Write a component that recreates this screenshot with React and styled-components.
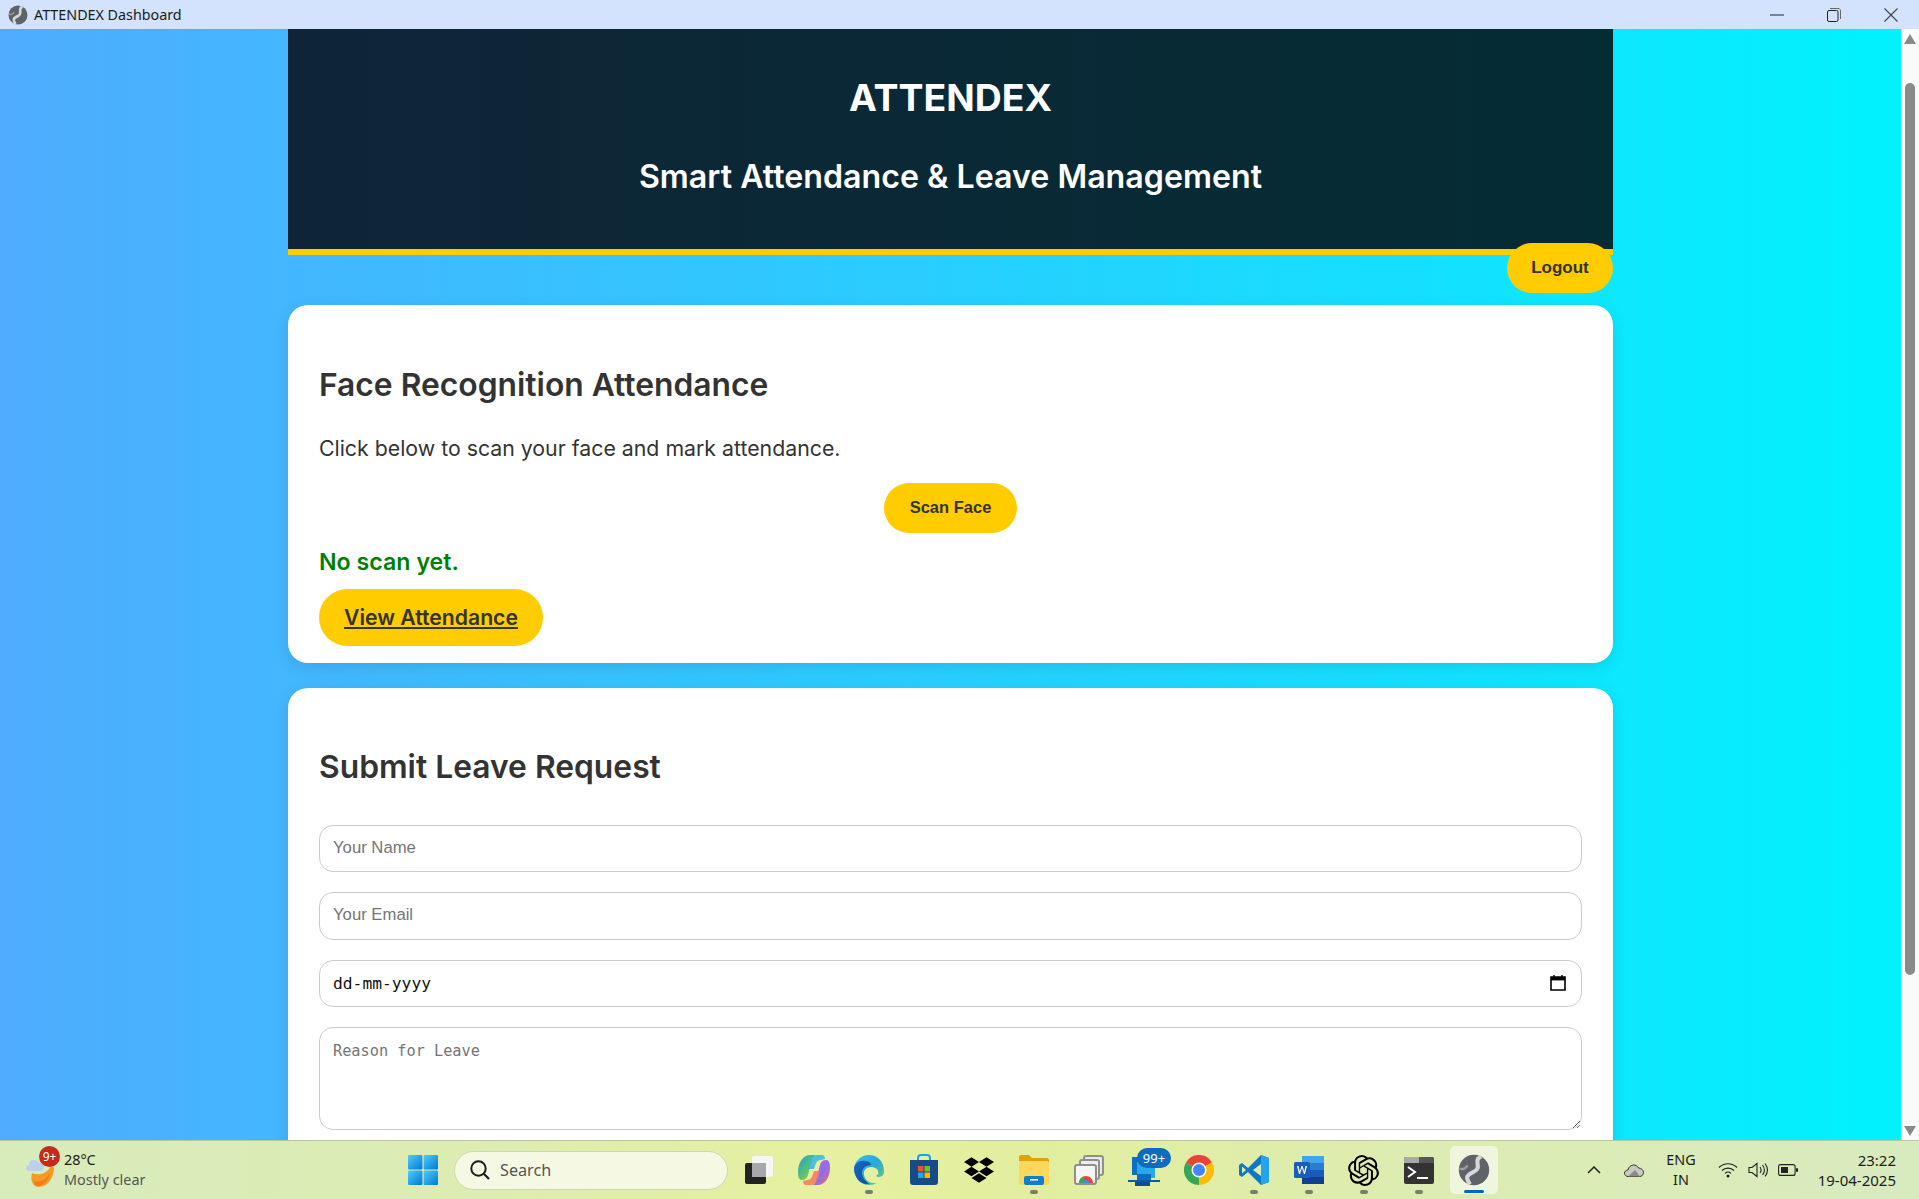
import React from "react";
import styled, { createGlobalStyle } from "styled-components";
import { SiDropbox, SiOpenai } from "react-icons/si";

const GlobalStyle = createGlobalStyle`
  html, body {
    margin: 0;
    height: 100%;
    overflow: hidden;
  }
  * {
    box-sizing: border-box;
  }
`;

const HEAD_FONT = `Inter, "Noto Sans", sans-serif`;
const UI_FONT = `"Noto Sans", "Open Sans", sans-serif`;
const ARIAL = `"Liberation Sans", Arial, sans-serif`;
const MONO = `"DejaVu Sans Mono", "Liberation Mono", monospace`;

const Globe = ({ size = 20 }) => (
  <svg width={size} height={size} viewBox="0 0 20 20">
    <circle cx="10" cy="10" r="9.500" fill="#5f6367" />
    <path d="M14.500 1.500C9 4 15.500 8.500 10 11S5 15 7.500 19" fill="none" stroke="#d5d8da" strokeWidth="2.600" />
    <path d="M1 9c2 1 4 0 5-2" fill="none" stroke="#9a9ea2" strokeWidth="1.500" />
  </svg>
);

const StartIcon = () => (
  <svg width="30" height="30" viewBox="0 0 30 30">
    <defs>
      <linearGradient id="win" x1="0" y1="0" x2="1" y2="1">
        <stop offset="0" stopColor="#50cdf8" />
        <stop offset="1" stopColor="#0078d4" />
      </linearGradient>
    </defs>
    <rect x="0" y="0" width="14.400" height="14.400" rx="1" fill="url(#win)" />
    <rect x="15.600" y="0" width="14.400" height="14.400" rx="1" fill="url(#win)" />
    <rect x="0" y="15.600" width="14.400" height="14.400" rx="1" fill="url(#win)" />
    <rect x="15.600" y="15.600" width="14.400" height="14.400" rx="1" fill="url(#win)" />
  </svg>
);

const TaskViewIcon = () => (
  <svg width="32" height="32" viewBox="0 0 32 32">
    <rect x="2" y="9" width="21" height="21" rx="2" fill="#222" />
    <rect x="9" y="2" width="21" height="21" rx="2" fill="#f6f6f4" />
    <rect x="9" y="9" width="14" height="14" fill="#a8a8a8" />
  </svg>
);

const CopilotIcon = () => (
  <svg width="32" height="32" viewBox="0 0 32 32">
    <defs>
      <linearGradient id="cop1" x1="0" y1="0" x2="1" y2="1">
        <stop offset="0" stopColor="#1f9be0" />
        <stop offset=".55" stopColor="#58c66a" />
        <stop offset="1" stopColor="#f2c53a" />
      </linearGradient>
      <linearGradient id="cop2" x1="0" y1="0" x2="1" y2="1">
        <stop offset="0" stopColor="#d860c8" />
        <stop offset=".55" stopColor="#8f6cf0" />
        <stop offset="1" stopColor="#f36f4e" />
      </linearGradient>
    </defs>
    <path d="M12 1h7c-3 0-4 2-5 5l-3 11c-1 5-2 9-7 9-3 0-4-3-4-8C0 9 5 1 12 1z" fill="url(#cop1)" />
    <path d="M20 31h-7c3 0 4-2 5-5l3-11c1-5 2-9 7-9 3 0 4 3 4 8 0 9-5 17-12 17z" fill="url(#cop2)" />
    <path d="M9 26c4 0 5-3 6-6l1-3h6l-2 7c-1 3-3 7-7 7H8c-2 0-3-2-3-4z" fill="#f47a5a" opacity=".85" />
    <path d="M23 6c-4 0-5 3-6 6l-1 3h-6l2-7c1-3 3-7 7-7h5c2 0 3 2 3 4z" fill="#35b6e0" opacity=".85" />
  </svg>
);

const EdgeIcon = () => (
  <svg width="32" height="32" viewBox="0 0 32 32">
    <defs>
      <linearGradient id="edgeA" x1="0" y1="0" x2="1" y2="1">
        <stop offset="0" stopColor="#35c1f1" />
        <stop offset=".5" stopColor="#2aa8d8" />
        <stop offset="1" stopColor="#66d36e" />
      </linearGradient>
      <linearGradient id="edgeB" x1="0" y1="0" x2="1" y2="1">
        <stop offset="0" stopColor="#1a6bc4" />
        <stop offset="1" stopColor="#0c4a96" />
      </linearGradient>
    </defs>
    <path d="M16 1C8 1 2 7 1 14c0 9 6 17 15 17 3 0 6-1 8-2-6 1-12-2-13-8-1-4 2-8 7-8 3 0 6 1 7 4 1 2 0 4-2 5 3 2 8 1 8-5C31 7 24 1 16 1z" fill="url(#edgeA)" />
    <path d="M1 14c1-5 6-8 11-7 5 0 6 3 6 4-5 0-9 3-9 8 0 4 3 8 7 11-9 1-15-7-15-16z" fill="url(#edgeB)" />
  </svg>
);

const StoreIcon = () => (
  <svg width="30" height="32" viewBox="0 0 30 32">
    <path d="M9 7V4c0-2 1-3 3-3h6c2 0 3 1 3 3v3" fill="none" stroke="#1da1e2" strokeWidth="2" />
    <path d="M1 6h28v22c0 2-1 3-3 3H4c-2 0-3-1-3-3z" fill="#164b86" />
    <rect x="9" y="12" width="5.500" height="5.500" fill="#e8542c" />
    <rect x="15.500" y="12" width="5.500" height="5.500" fill="#7cb82f" />
    <rect x="9" y="18.500" width="5.500" height="5.500" fill="#26a6e8" />
    <rect x="15.500" y="18.500" width="5.500" height="5.500" fill="#f5b800" />
  </svg>
);

const FolderIcon = () => (
  <svg width="30" height="30" viewBox="0 0 30 30">
    <path d="M0 2c0-1 1-2 2-2h8l3 3h15c1 0 2 1 2 2v5H0z" fill="#e0a30a" />
    <path d="M0 6h28c1 0 2 1 2 2v20c0 1-1 2-2 2H2c-1 0-2-1-2-2z" fill="#fdd75c" />
    <rect x="5" y="21" width="20" height="9" rx="2" fill="#0f7fc8" />
    <rect x="11" y="24" width="8" height="1.600" fill="#e9f5ff" />
  </svg>
);

const GalleryIcon = () => (
  <svg width="30" height="30" viewBox="0 0 30 30">
    <rect x="10" y="1" width="19" height="19" rx="2" fill="#e9e9e6" stroke="#8f8f8f" strokeWidth="2" />
    <rect x="6" y="5" width="19" height="19" rx="2" fill="#eeeeeb" stroke="#8f8f8f" strokeWidth="2" />
    <rect x="1" y="10" width="21" height="19" rx="2" fill="#f6f6f4" stroke="#8f8f8f" strokeWidth="2" />
    <path d="M5 28a7 7 0 0 1 14 0z" fill="#ea4335" />
    <path d="M5 28a7 7 0 0 1 5-6.500l1 6.500z" fill="#34a853" />
    <path d="M15 28a3 3 0 0 0-6 0z" fill="#4285f4" />
  </svg>
);

const OutlookIcon = () => (
  <svg width="32" height="32" viewBox="0 0 32 32">
    <rect x="4" y="3" width="15" height="18" fill="#1070c0" />
    <rect x="9" y="8" width="18" height="16" fill="#28a8ea" />
    <path d="M0 26h32v2H0z" fill="#0a5ca8" />
    <rect x="7" y="28" width="15" height="4" fill="#0a4f92" />
    <rect x="9" y="20" width="14" height="6" fill="#0f6cbd" />
  </svg>
);

const ChromeIcon = () => (
  <svg width="30" height="30" viewBox="0 0 30 30">
    <path d="M15 15 2 7.500A15 15 0 0 1 28 7.500z" fill="#ea4335" />
    <path d="M15 15 2 7.500A15 15 0 0 0 15 30z" fill="#34a853" />
    <path d="M15 15 28 7.500A15 15 0 0 1 15 30z" fill="#fbbc04" />
    <circle cx="15" cy="15" r="7.500" fill="#fff" />
    <circle cx="15" cy="15" r="6" fill="#4285f4" />
  </svg>
);

const VsCodeIcon = () => (
  <svg width="30" height="30" viewBox="0 0 30 30">
    <path d="M22 0 9 13 3 8 0 10v10l3 2 6-5 13 13 8-3V3z" fill="#0f78c4" />
    <path d="M22 0v30l8-3V3z" fill="#22a4ee" />
    <path d="M22 9v12l-8-6z" fill="#dfeeb0" />
    <path d="M3 11.500v7l4-3.500z" fill="#dfeeb0" />
  </svg>
);

const WordIcon = () => (
  <svg width="30" height="30" viewBox="0 0 30 30">
    <rect x="8" y="1" width="22" height="7" fill="#41a5ee" />
    <rect x="8" y="8" width="22" height="7" fill="#2b7cd3" />
    <rect x="8" y="15" width="22" height="7" fill="#185abd" />
    <rect x="8" y="22" width="22" height="7" fill="#103f91" />
    <rect x="0" y="7" width="16" height="16" rx="1.500" fill="#1a5dbe" />
    <path d="m3 11 2 8h1l2-6 2 6h1l2-8h-1.500l-1.200 5.500L8.500 11h-1l-1.800 5.500L4.500 11z" fill="#fff" />
  </svg>
);

const TerminalIcon = () => (
  <svg width="30" height="30" viewBox="0 0 30 30">
    <rect x="0" y="2" width="30" height="27" rx="2" fill="#333" />
    <path d="M0 4c0-1 1-2 2-2h13v6H0z" fill="#a9a9a9" />
    <path d="M15 2h13c1 0 2 1 2 2v4H15z" fill="#555" />
    <path d="m4 12 7 5-7 5" fill="none" stroke="#fff" strokeWidth="2" />
    <rect x="13" y="22" width="11" height="2" fill="#fff" />
  </svg>
);

const WeatherIcon = () => (
  <svg width="30" height="42" viewBox="0 0 30 42">
    <path d="M6 24c6 3 15 1 18-6 2-1 4 0 4 1 0 10-7 19-15 19-6 0-9-6-7-14z" fill="#f59a23" />
    <path d="M8 32c5 2 12-1 16-8-1 7-7 13-12 13-2 0-4-2-4-5z" fill="#f07d1a" />
    <path d="M3 22c-2 0-3-1.500-3-3s1-3 3-3c0-3 2-5 5-5s4 1 5 3c3 0 5 2 5 4s-1 4-4 4z" fill="#bcd0ee" />
  </svg>
);

const App = () => (
  <Shell>
    <GlobalStyle />
    <TitleBar>
      <Globe size={20} />
      <WindowTitle>ATTENDEX Dashboard</WindowTitle>
      <WindowControls>
        <svg width="14" height="14" viewBox="0 0 14 14">
          <path d="M0 7h14" stroke="#222" strokeWidth="1" />
        </svg>
        <svg width="14" height="14" viewBox="0 0 14 14">
          <rect x=".5" y="2.500" width="10.500" height="11" rx="1.500" fill="none" stroke="#222" />
          <path d="M3 .5h8c1.500 0 2.500 1 2.500 2.500v8" fill="none" stroke="#666" />
        </svg>
        <svg width="14" height="14" viewBox="0 0 14 14">
          <path d="m.5.5 13 13M13.500.5l-13 13" stroke="#444" strokeWidth="1.100" />
        </svg>
      </WindowControls>
    </TitleBar>

    <Middle>
      <Page>
        <Container>
          <HeaderWrap>
            <Header>
              <Title>ATTENDEX</Title>
              <Subtitle>Smart Attendance &amp; Leave Management</Subtitle>
            </Header>
            <LogoutButton>Logout</LogoutButton>
          </HeaderWrap>

          <Card $top={50} $pad={60} $bottom={17}>
            <CardTitle>Face Recognition Attendance</CardTitle>
            <Lead>Click below to scan your face and mark attendance.</Lead>
            <Centered>
              <PillButton>Scan Face</PillButton>
            </Centered>
            <Status>No scan yet.</Status>
            <ViewLink href="#">View Attendance</ViewLink>
          </Card>

          <Card $top={25} $pad={59} $bottom={30}>
            <CardTitle>Submit Leave Request</CardTitle>
            <Form>
              <TextInput type="text" placeholder="Your Name" />
              <TextInput type="email" placeholder="Your Email" />
              <DateField>
                <DateText>dd-mm-yyyy</DateText>
                <svg width="16" height="16" viewBox="0 0 16 16">
                  <path d="M1 2h14v13H1z" fill="none" stroke="#000" strokeWidth="1.600" />
                  <path d="M1 2h14v3.400H1z" fill="#000" />
                  <path d="M4 0v3M12 0v3" stroke="#000" strokeWidth="1.400" />
                </svg>
              </DateField>
              <ReasonBox placeholder="Reason for Leave" />
            </Form>
          </Card>
        </Container>
      </Page>

      <Scrollbar>
        <ArrowUp />
        <Thumb />
        <ArrowDown />
      </Scrollbar>
    </Middle>

    <Taskbar>
      <Weather>
        <WeatherArt>
          <WeatherIcon />
          <WeatherBadge>9+</WeatherBadge>
        </WeatherArt>
        <WeatherText>
          <Temp>28°C</Temp>
          <Sky>Mostly clear</Sky>
        </WeatherText>
      </Weather>

      <Tile>
        <StartIcon />
      </Tile>
      <SearchBox>
        <svg width="22" height="22" viewBox="0 0 22 22">
          <circle cx="9.500" cy="9.500" r="7.200" fill="none" stroke="#1c1c1c" strokeWidth="2" />
          <path d="m14.800 14.800 5.200 5.200" stroke="#1c1c1c" strokeWidth="2.200" />
        </svg>
        <span>Search</span>
      </SearchBox>
      <Tile>
        <TaskViewIcon />
      </Tile>
      <Tile>
        <CopilotIcon />
      </Tile>
      <Tile $dot>
        <EdgeIcon />
      </Tile>
      <Tile>
        <StoreIcon />
      </Tile>
      <Tile>
        <SiDropbox size={30} color="#000" />
      </Tile>
      <Tile $dot>
        <FolderIcon />
      </Tile>
      <Tile>
        <GalleryIcon />
      </Tile>
      <Tile>
        <OutlookIcon />
        <CountBadge>99+</CountBadge>
      </Tile>
      <Tile>
        <ChromeIcon />
      </Tile>
      <Tile $dot>
        <VsCodeIcon />
      </Tile>
      <Tile $dot>
        <WordIcon />
      </Tile>
      <Tile $dot>
        <SiOpenai size={31} color="#000" />
      </Tile>
      <Tile $dot>
        <TerminalIcon />
      </Tile>
      <ActiveTile>
        <Globe size={32} />
      </ActiveTile>

      <Tray>
        <svg width="14" height="8" viewBox="0 0 14 8">
          <path d="m1 7 6-6 6 6" fill="none" stroke="#222" strokeWidth="1.500" />
        </svg>
        <svg width="20" height="14" viewBox="0 0 20 14">
          <path d="M4 13.500c-2 0-3.500-1.500-3.500-3.300S2 7 4 7c.5-3 3-5 5.500-5 2.300 0 4 1 5 3 2.500 0 5 2 5 4.500s-2 4-4 4z" fill="#c9c9c4" stroke="#333" />
          <path d="M4 13.500 11 7l5 6.500z" fill="#8a8a86" />
        </svg>
        <Lang>
          <span>ENG</span>
          <span>IN</span>
        </Lang>
        <StatusIcons>
          <svg width="20" height="16" viewBox="0 0 20 16">
            <path d="M1 5.500c5-5 13-5 18 0M4 8.500c3.300-3.300 8.700-3.300 12 0M7 11.300c1.700-1.700 4.300-1.700 6 0" fill="none" stroke="#222" strokeWidth="1.200" />
            <circle cx="10" cy="14" r="1.500" fill="#222" />
          </svg>
          <svg width="20" height="16" viewBox="0 0 20 16">
            <path d="M1 5.500h3L9 1.500v13l-5-4H1z" fill="none" stroke="#222" strokeWidth="1.100" />
            <path d="M12 5c1.300 1.800 1.300 4.200 0 6M14.500 3c2.300 3 2.300 7 0 10M17 1.500c3 4 3 9 0 13" fill="none" stroke="#222" strokeWidth="1.100" />
          </svg>
          <svg width="20" height="12" viewBox="0 0 20 12">
            <rect x=".6" y=".6" width="16.500" height="10.800" rx="2" fill="none" stroke="#222" strokeWidth="1.100" />
            <rect x="3" y="3" width="7" height="6" fill="#222" />
            <rect x="18" y="4" width="2" height="4" rx="1" fill="#222" />
          </svg>
        </StatusIcons>
        <Clock>
          <span>23:22</span>
          <span>19-04-2025</span>
        </Clock>
      </Tray>
    </Taskbar>
  </Shell>
);

const Shell = styled.div`
  height: 100vh;
  display: flex;
  flex-direction: column;
  overflow: hidden;
`;

const TitleBar = styled.div`
  flex: 0 0 29px;
  display: flex;
  align-items: center;
  padding-left: 8px;
  background: #d3e3fd;
`;

const WindowTitle = styled.span`
  margin-left: 6px;
  font: 14.300px ${UI_FONT};
  color: #1a1a1a;
`;

const WindowControls = styled.div`
  margin-left: auto;
  display: flex;
  gap: 43px;
  padding-right: 21px;
  align-items: center;
`;

const Middle = styled.div`
  flex: 1;
  min-height: 0;
  display: flex;
`;

const Page = styled.main`
  flex: 1;
  min-width: 0;
  overflow: hidden;
  background: linear-gradient(to right, #4facfe 0%, #00f2fe 100%);
`;

const Container = styled.div`
  width: 1325px;
  margin-left: 288px;
`;

const HeaderWrap = styled.div`
  position: relative;
`;

const Header = styled.header`
  height: 226px;
  padding-top: 45px;
  text-align: center;
  color: #fff;
  border-bottom: 6px solid #ffcc00;
  background: linear-gradient(to right, #0f2537, #042c34);
`;

const Title = styled.h1`
  margin: 0;
  font: 700 37.400px/48px ${HEAD_FONT};
`;

const Subtitle = styled.h2`
  margin: 35px 0 0;
  font: 600 32.200px/40px ${HEAD_FONT};
`;

const LogoutButton = styled.button`
  position: absolute;
  right: 0;
  top: 214px;
  width: 106px;
  height: 50px;
  border: none;
  border-radius: 25px;
  background: #ffcc00;
  color: #333;
  font: 700 17px ${ARIAL};
`;

const Card = styled.section`
  margin-top: ${p => p.$top}px;
  padding: ${p => p.$pad}px 31px ${p => p.$bottom}px;
  background: #fff;
  border-radius: 20px;
  box-shadow: 0 4px 15px rgba(0, 0, 0, 0.1);
`;

const CardTitle = styled.h2`
  margin: 0;
  font: 600 31.800px/40px ${HEAD_FONT};
  color: #333;
`;

const Lead = styled.p`
  margin: 28px 0 0;
  font: 400 21.300px/30px ${HEAD_FONT};
  color: #333;
`;

const Centered = styled.div`
  margin-top: 20px;
  display: flex;
  justify-content: center;
`;

const PillButton = styled.button`
  width: 133px;
  height: 50px;
  padding-bottom: 2px;
  border: none;
  border-radius: 25px;
  background: #ffcc00;
  color: #333;
  font: 700 16.500px ${ARIAL};
`;

const Status = styled.p`
  margin: 14px 0 0;
  font: 600 23.200px/30px ${HEAD_FONT};
  color: #008000;
`;

const ViewLink = styled.a`
  display: inline-flex;
  align-items: center;
  justify-content: center;
  margin-top: 12px;
  width: 224px;
  height: 57px;
  padding-bottom: 2px;
  border-radius: 29px;
  background: #ffcc00;
  color: #333;
  font: 600 21.200px ${HEAD_FONT};
  text-decoration: underline;
`;

const Form = styled.div`
  margin-top: 38px;
  display: flex;
  flex-direction: column;
  gap: 20px;
`;

const TextInput = styled.input`
  width: 100%;
  height: 47.330px;
  padding: 0 13px 2px;
  border: 1.500px solid #ccc;
  border-radius: 14px;
  outline: none;
  font: 16.700px ${ARIAL};
  &::placeholder {
    color: #757575;
  }
`;

const DateField = styled.div`
  height: 47.330px;
  padding: 0 15.500px 0 13px;
  display: flex;
  align-items: center;
  justify-content: space-between;
  border: 1.500px solid #ccc;
  border-radius: 14px;
`;

const DateText = styled.span`
  font: 16.300px ${MONO};
  color: #111;
`;

const ReasonBox = styled.textarea`
  display: block;
  width: 100%;
  height: 103px;
  padding: 14px 13px;
  border: 1.500px solid #ccc;
  border-radius: 14px;
  outline: none;
  font: 15.250px ${MONO};
  &::placeholder {
    color: #757575;
  }
`;

const Scrollbar = styled.div`
  flex: 0 0 18px;
  display: flex;
  flex-direction: column;
  align-items: center;
  padding: 5px 0 4px;
  background: #fafafa;
`;

const ArrowUp = styled.div`
  width: 0;
  height: 0;
  border-left: 6px solid transparent;
  border-right: 6px solid transparent;
  border-bottom: 10px solid #8a8a8a;
`;

const ArrowDown = styled.div`
  width: 0;
  height: 0;
  margin-top: auto;
  border-left: 6px solid transparent;
  border-right: 6px solid transparent;
  border-top: 10px solid #8a8a8a;
`;

const Thumb = styled.div`
  width: 10px;
  height: 892px;
  margin-top: 39px;
  border-radius: 5px;
  background: #8a8a8a;
`;

const Taskbar = styled.footer`
  flex: 0 0 59px;
  display: flex;
  align-items: center;
  border-top: 1px solid #b9c69c;
  background: linear-gradient(
    to right,
    #d8ebbb 0%,
    #dcecb2 25%,
    #e6f0a0 42%,
    #e2ee9f 55%,
    #dcecb2 75%,
    #d8ebbf 100%
  );
  font-family: ${UI_FONT};
  color: #1c1c1c;
`;

const Weather = styled.div`
  flex: 0 0 395px;
  display: flex;
  align-items: center;
  padding-left: 26px;
  gap: 9px;
`;

const WeatherArt = styled.div`
  position: relative;
  width: 29px;
  height: 42px;
`;

const WeatherBadge = styled.span`
  position: absolute;
  left: 13px;
  top: -3px;
  width: 21px;
  height: 21px;
  border-radius: 50%;
  background: #c42b1c;
  color: #fff;
  font-size: 12px;
  line-height: 21px;
  text-align: center;
`;

const WeatherText = styled.div`
  display: flex;
  flex-direction: column;
  font-size: 14.400px;
  line-height: 20px;
`;

const Temp = styled.span`
  color: #1c1c1c;
`;

const Sky = styled.span`
  color: #555;
`;

const Tile = styled.div`
  position: relative;
  flex: 0 0 55px;
  height: 48px;
  display: flex;
  align-items: center;
  justify-content: center;
  ${p =>
    p.$dot &&
    `&::after {
      content: "";
      position: absolute;
      left: 50%;
      bottom: 0;
      width: 8px;
      height: 4px;
      margin-left: -4px;
      border-radius: 2px;
      background: #75806a;
    }`}
`;

const ActiveTile = styled(Tile)`
  flex-basis: 48px;
  margin-left: 4px;
  margin-right: 3px;
  border-radius: 5px;
  background: rgba(255, 255, 255, 0.55);
  &::after {
    content: "";
    position: absolute;
    left: 14px;
    right: 14px;
    bottom: 1px;
    height: 3px;
    border-radius: 2px;
    background: #0067c0;
  }
`;

const CountBadge = styled.span`
  position: absolute;
  left: 21px;
  top: 2px;
  width: 34px;
  height: 20px;
  border-radius: 10px;
  background: #0f6cbd;
  color: #fff;
  font-size: 13px;
  line-height: 20px;
  text-align: center;
`;

const SearchBox = styled.div`
  flex: 0 0 274px;
  height: 39px;
  margin: 0 3px 0 4px;
  padding-left: 14px;
  display: flex;
  align-items: center;
  gap: 9px;
  border: 1px solid #cfd8ae;
  border-radius: 20px;
  background: #f5f9e3;
  color: #555;
  font-size: 16.200px;
`;

const Tray = styled.div`
  margin-left: auto;
  display: flex;
  align-items: center;
  padding-right: 23px;
  & > svg:first-child {
    margin-right: 23px;
  }
`;

const Lang = styled.div`
  margin-left: 22.500px;
  display: flex;
  flex-direction: column;
  align-items: center;
  font-size: 14.400px;
  line-height: 20px;
`;

const StatusIcons = styled.div`
  margin-left: 22px;
  display: flex;
  align-items: center;
  gap: 10px;
`;

const Clock = styled.div`
  margin-left: 20px;
  display: flex;
  flex-direction: column;
  align-items: flex-end;
  font-size: 15px;
  line-height: 20px;
`;

export default App;
